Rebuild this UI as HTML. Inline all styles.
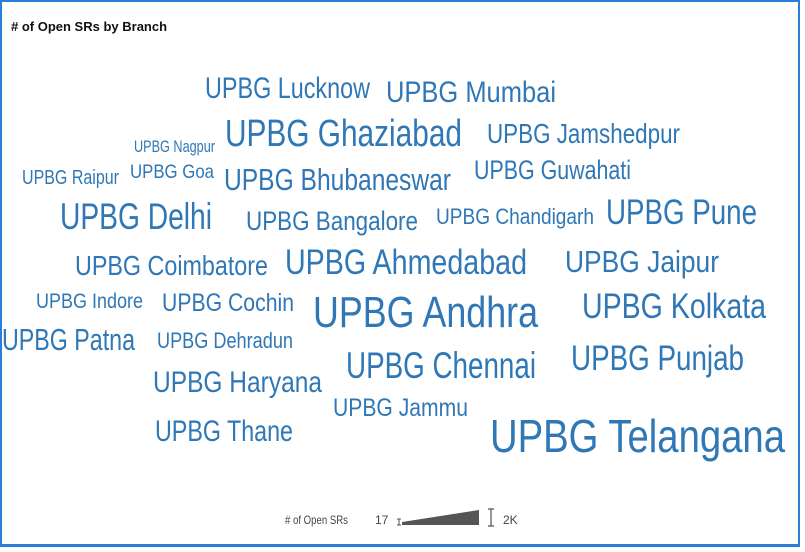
<!DOCTYPE html>
<html><head><meta charset="utf-8"><style>
html,body{margin:0;padding:0;background:#fff;width:805px;height:552px;overflow:hidden}
#box{position:absolute;left:0;top:0;width:796px;height:542px;border:2px solid #2b7fd9;border-bottom-width:3px}
.t{position:absolute;left:11px;top:19px;font:bold 13px "Liberation Sans",sans-serif;color:#111}
.w{position:absolute;white-space:nowrap;font-family:"Liberation Sans",sans-serif;color:#2f77b5;line-height:1;transform-origin:0 0}
.lg{position:absolute;font:12px "Liberation Sans",sans-serif;color:#444;top:513px}
</style></head><body>
<div id="box"></div>
<div class="t"># of Open SRs by Branch</div>
<div id="c"></div>
<div class="lg" style="left:285px;transform:scaleX(.8);transform-origin:0 0"># of Open SRs</div>
<div class="lg" style="left:375px">17</div>
<svg style="position:absolute;left:392px;top:504px" width="130" height="24">
<path d="M5 15 H9 M5 21 H9 M7 15 V21" stroke="#555" stroke-width="1"/>
<polygon points="10,21 10,18 87,6 87,21" fill="#555"/>
<path d="M96 5 H102 M96 22 H102 M99 5 V22" stroke="#555" stroke-width="1.2"/>
</svg>
<div class="lg" style="left:503px">2K</div>
<script>
var d=[["Lucknow",205,370,88,21],["Mumbai",386,556,92,21],["Ghaziabad",225,462,134,27.5],["Jamshedpur",487,680,134,20],
["Nagpur",134,215,147.5,12],["Goa",130,214,173,14],["Raipur",22,119,178,14.5],["Bhubaneswar",224,451,180,22],
["Guwahati",474,631,170,19],["Delhi",60,212,216,26.5],["Bangalore",246,418,221,19],["Chandigarh",436,594,217,16],
["Pune",606,757,212,25.5],["Coimbatore",75,268,266,20],["Ahmedabad",285,527,262,25.5],["Jaipur",565,719,262,22],
["Indore",36,143,302,15],["Cochin",162,294,303,18],["Andhra",313,538,313,31.5],["Kolkata",582,766,306,25.5],
["Patna",2,135,340,22],["Dehradun",157,293,341,16],["Chennai",346,536,365,26.5],["Punjab",571,744,358,25.5],
["Haryana",153,322,382,21],["Jammu",333,468,408,18],["Thane",155,293,431,21],["Telangana",490,785,436,33.5]];
var c=document.getElementById('c');
d.forEach(function(a){var e=document.createElement('div');e.className='w';e.textContent='UPBG '+a[0];
var fs=a[4]/0.716;e.style.fontSize=fs+'px';e.style.left=a[1]+'px';e.style.top=(a[3]-0.49*fs)+'px';c.appendChild(e);
var w=e.getBoundingClientRect().width;e.style.transform='scaleX('+((a[2]-a[1])/w)+')';});
</script>
</body></html>
